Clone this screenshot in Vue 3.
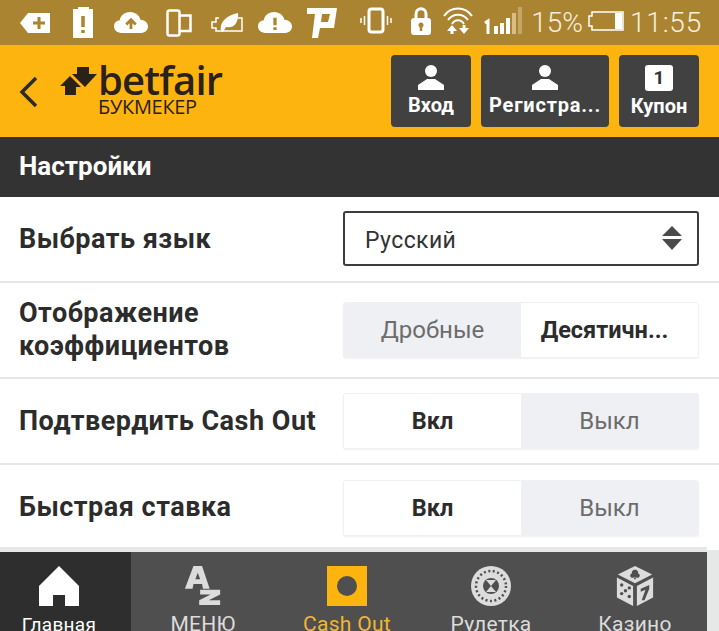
<template>
  <div class="page">
    <!-- статус-бар -->
    <div class="status-bar">
      <div class="status-icons">
        <svg width="30" height="20" viewBox="0 0 30 20" class="s-tag"><path d="M8 0H30V20H8L0 10Z" fill="#fff"/><path d="M13 10H25M19 4V16" stroke="#ab8431" stroke-width="3"/></svg>
        <svg width="21" height="31" viewBox="0 0 21 31" class="s-batt"><path d="M5 0H16V2H20V31H0V2H5Z" fill="#fff"/><path d="M10 9V20M10 23V26" stroke="#ab8431" stroke-width="3.500"/></svg>
        <svg width="34" height="23" viewBox="0 0 36 24" class="s-cloud"><path d="M8 23C3 23 0 20 0 16C0 12 3 10 6 10C7 4 12 1 17 1C23 1 27 5 28 9C32 9 36 12 36 16C36 20 33 23 29 23Z" fill="#fff"/><path d="M18 19V10M13 14L18 9L23 14" stroke="#ab8431" stroke-width="3" fill="none"/></svg>
        <svg width="26" height="28" viewBox="0 0 26 28" class="s-phones"><rect x="1.500" y="1.500" width="12" height="25" rx="2" fill="none" stroke="#fff" stroke-width="2.500"/><path d="M14 6.500H24.500V22H14" fill="none" stroke="#fff" stroke-width="2.500"/></svg>
        <svg width="33" height="22" viewBox="0 0 33 22" class="s-leaf"><path d="M8 6H5V10H1V16H5V19H31V6H27" fill="none" stroke="#fff" stroke-width="1.500"/><path d="M10 19C8 10 16 3 27 1C28 10 23 17 15 15L12 20Z" fill="#fff"/></svg>
        <svg width="34" height="23" viewBox="0 0 36 24" class="s-cloud2"><path d="M8 23C3 23 0 20 0 16C0 12 3 10 6 10C7 4 12 1 17 1C23 1 27 5 28 9C32 9 36 12 36 16C36 20 33 23 29 23Z" fill="#fff"/><path d="M18 7V15M18 17V20" stroke="#ab8431" stroke-width="3.500"/></svg>
        <svg width="30" height="30" viewBox="0 0 30 30" class="s-p"><path fill-rule="evenodd" d="M0 0H30L27 20H13L11 30H5L8 6H0ZM15 6H23L21 14H14Z" fill="#fff"/></svg>
      </div>
      <div class="status-right">
        <svg width="32" height="27" viewBox="0 0 32 27"><rect x="9" y="2" width="14" height="23" rx="2.500" fill="none" stroke="#fff" stroke-width="3"/><path d="M4.500 9V18M1 11V16M27.500 9V18M31 11V16" stroke="#fff" stroke-width="1.500"/></svg>
        <svg width="20" height="28" viewBox="0 0 20 28" class="s-lock"><path d="M5 12V7C5 0 15 0 15 7V12" fill="none" stroke="#fff" stroke-width="3"/><rect x="0" y="11" width="20" height="17" rx="3" fill="#fff"/><circle cx="10" cy="18" r="2.500" fill="#ab8431"/><path d="M10 19V24" stroke="#ab8431" stroke-width="2.500"/></svg>
        <svg width="32" height="29" viewBox="0 0 32 29" class="s-wifi"><path d="M1 10C8 0 22 0 29 10M5 14C10 7 20 7 25 14M9 18C12 13 18 13 21 18" fill="none" stroke="#fff" stroke-width="2"/><path d="M9 19L4 25H7.500V28H10.500V25H14Z" fill="#fff"/><path d="M21 28L26 22H22.500V19H19.500V22H16Z" fill="#fff"/></svg>
        <svg width="40" height="29" viewBox="0 0 40 29" class="s-signal"><path d="M2 17L5 15V28" stroke="#fff" stroke-width="3" fill="none"/><rect x="11" y="20" width="4" height="8" fill="#fff"/><rect x="17" y="17" width="4" height="11" fill="#fff"/><rect x="23" y="12" width="4" height="16" fill="#fff"/><rect x="29" y="7" width="4" height="21" fill="#d8bd85"/><rect x="35" y="1" width="4" height="27" fill="#c3a566"/></svg>
        <span class="battery-text">15%</span>
        <svg width="36" height="20" viewBox="0 0 36 20" class="s-charge"><path d="M4 1H35V19H4V15H1V5H4Z" fill="none" stroke="#fff" stroke-width="1.500"/><rect x="27" y="2" width="7" height="16" fill="#fff"/></svg>
        <span class="clock">11:55</span>
      </div>
    </div>

    <!-- шапка -->
    <header class="top">
      <svg class="back" width="20" height="32" viewBox="0 0 20 32"><path d="M17 2L3 16L17 30" fill="none" stroke="#2b2b2b" stroke-width="3.500"/></svg>
      <div class="logo">
        <svg class="logo-mark" width="38" height="30" viewBox="0 0 38 30"><path d="M17 0H29V7H37L25 20L12 7H17Z" fill="#2a2118"/><path d="M0 19L10 9L21 20H16V28H5V19Z" fill="#2a2118"/></svg>
        <div class="logo-text">
          <div class="logo-name">betfair</div>
          <div class="logo-sub">БУКМЕКЕР</div>
        </div>
      </div>
      <div class="top-buttons">
        <button class="top-btn login">
          <svg width="26" height="25" viewBox="0 0 26 25"><circle cx="13" cy="6" r="6" fill="#fff"/><path d="M0 25V20L9 14H17L26 20V25Z" fill="#fff"/></svg>
          <span>Вход</span>
        </button>
        <button class="top-btn register">
          <svg width="26" height="25" viewBox="0 0 26 25"><circle cx="13" cy="6" r="6" fill="#fff"/><path d="M0 25V20L9 14H17L26 20V25Z" fill="#fff"/></svg>
          <span>Регистра...</span>
        </button>
        <button class="top-btn coupon">
          <span class="coupon-count">1</span>
          <span>Купон</span>
        </button>
      </div>
    </header>

    <div class="title-bar">Настройки</div>

    <!-- настройки -->
    <div class="settings">
      <div class="row row-lang">
        <div class="row-label">Выбрать язык</div>
        <div class="select">
          <span>Русский</span>
          <svg width="20" height="24" viewBox="0 0 20 24"><path d="M10 0L20 10H0Z M0 13H20L10 24Z" fill="#4a4a4a"/></svg>
        </div>
      </div>
      <div class="row row-odds">
        <div class="row-label">Отображение<br>коэффициентов</div>
        <div class="toggle">
          <div class="opt">Дробные</div>
          <div class="opt on trunc">Десятичн...</div>
        </div>
      </div>
      <div class="row row-switch">
        <div class="row-label">Подтвердить Cash Out</div>
        <div class="toggle">
          <div class="opt on">Вкл</div>
          <div class="opt">Выкл</div>
        </div>
      </div>
      <div class="row row-switch last">
        <div class="row-label">Быстрая ставка</div>
        <div class="toggle">
          <div class="opt on">Вкл</div>
          <div class="opt">Выкл</div>
        </div>
      </div>
    </div>

    <!-- нижнее меню -->
    <div class="nav-wrap">
      <nav class="bottom-nav">
        <div class="nav-item active">
          <svg width="42" height="40" viewBox="0 0 42 40"><path d="M21 0L41 20V40H27V29H15V40H1V20Z" fill="#fff"/></svg>
          <span>Главная</span>
        </div>
        <div class="nav-item">
          <svg width="40" height="42" viewBox="0 0 40 42"><path d="M10 0H19L27 24H20L19 19H10L9 24H1Z M12 14H17L14.500 7Z" fill="#dcdcdc" fill-rule="evenodd"/><path d="M17 25H38V30L26 36H38V41H16V36L28 30H17Z" fill="#dcdcdc"/></svg>
          <span>МЕНЮ</span>
        </div>
        <div class="nav-item cash">
          <div class="cash-icon"><i></i></div>
          <span>Cash Out</span>
        </div>
        <div class="nav-item">
          <svg width="40" height="40" viewBox="0 0 40 40"><circle cx="20" cy="20" r="20" fill="#dcdcdc"/><circle cx="20" cy="20" r="15" fill="none" stroke="#4f4f4f" stroke-width="2.500" stroke-dasharray="2 2.500"/><circle cx="20" cy="20" r="8" fill="#4f4f4f"/><path d="M20 20L15 14H25ZM20 20L15 26H25Z" fill="#dcdcdc"/></svg>
          <span>Рулетка</span>
        </div>
        <div class="nav-item">
          <svg width="38" height="42" viewBox="0 0 38 42"><path d="M19 0L37 9L19 18L1 9Z" fill="#dcdcdc"/><path d="M0 12L17 21V42L0 33Z" fill="#dcdcdc"/><path d="M21 21L38 12V33L21 42Z" fill="#dcdcdc"/><path d="M19 4C16 4 15 7 16 8C14 8 13 11 15 12C17 13 18 12 18.500 11L18 14H20L19.500 11C20 12 21 13 23 12C25 11 24 8 22 8C23 7 22 4 19 4Z" fill="#4f4f4f"/><circle cx="5" cy="20" r="1.800" fill="#4f4f4f"/><circle cx="9" cy="26" r="1.800" fill="#4f4f4f"/><circle cx="13" cy="32" r="1.800" fill="#4f4f4f"/><circle cx="5" cy="29" r="1.800" fill="#4f4f4f"/><circle cx="13" cy="23" r="1.800" fill="#4f4f4f"/><path d="M25 24L34 20V24L29 36H26L30 25L25 27Z" fill="#4f4f4f"/></svg>
          <span>Казино</span>
        </div>
      </nav>
    </div>
  </div>
</template>

<script setup>
</script>

<style>
html, body { margin: 0; background: #fff; }
</style>

<style scoped>
.page {
  width: 719px;
  height: 631px;
  overflow: hidden;
  display: flex;
  flex-direction: column;
  font-family: Roboto, "Liberation Sans", sans-serif;
  background: #fff;
  color: #2c2c2c;
}

.status-bar {
  height: 45px;
  flex: none;
  background: #ab8431;
  display: flex;
  align-items: center;
  justify-content: space-between;
  padding: 0 17px 0 20px;
  box-sizing: border-box;
}

.status-icons {
  display: flex;
  align-items: center;
}

.s-batt { margin-left: 23px; }
.s-cloud { margin-left: 20px; }
.s-phones { margin-left: 18px; }
.s-leaf { margin-left: 19px; }
.s-cloud2 { margin-left: 14px; }
.s-p { margin-left: 15px; }

.status-right {
  display: flex;
  align-items: center;
  color: #f7efdf;
}

.status-right svg { flex: none; margin-bottom: 4px; }
.s-lock { margin-left: 19px; }
.s-wifi { margin-left: 12px; }
.s-signal { margin-left: 8px; }
.s-charge { margin-left: 5px; }

.battery-text {
  font-size: 28px;
  margin-left: 8px;
  font-weight: 300;
}

.clock {
  font-size: 28px;
  margin-left: 6px;
  font-weight: 300;
  letter-spacing: 0.8px;
}

.top {
  height: 92px;
  flex: none;
  background: #feb40e;
  display: flex;
  align-items: center;
  padding: 0 20px 0 19px;
  box-sizing: border-box;
}

.back { margin-top: 2px; }

.logo {
  display: flex;
  align-items: flex-start;
  margin-left: 21px;
}

.logo-mark { flex: none; }

.logo-text {
  margin-top: -4px;
  color: #2a2118;
}

.logo-name {
  font-family: "Open Sans", sans-serif;
  font-size: 40px;
  font-weight: 600;
  line-height: 34px;
  letter-spacing: -0.8px;
}

.logo-sub {
  font-family: "Open Sans", sans-serif;
  font-size: 20px;
  line-height: 19px;
  letter-spacing: -0.3px;
}

.top-buttons {
  margin-left: auto;
  display: flex;
  gap: 10px;
}

.top-btn {
  height: 72px;
  border: 0;
  border-radius: 4px;
  background: #414141;
  color: #fff;
  font-family: inherit;
  font-size: 20px;
  font-weight: 700;
  line-height: 24px;
  display: flex;
  flex-direction: column;
  align-items: center;
  justify-content: flex-start;
  padding: 10px 0 0;
  gap: 3px;
}

.login { width: 80px; }
.register { width: 128px; letter-spacing: 0.8px; }
.coupon { width: 80px; }

.coupon-count {
  width: 28px;
  height: 26px;
  border-radius: 3px;
  background: #fff;
  color: #333;
  font-size: 19px;
  line-height: 26px;
  text-align: center;
}

.title-bar {
  height: 60px;
  flex: none;
  background: #333;
  color: #fff;
  font-size: 26px;
  font-weight: 700;
  line-height: 58px;
  padding-left: 19px;
}

.settings {
  flex: none;
  width: 707px;
}

.row {
  display: flex;
  align-items: center;
  justify-content: space-between;
  padding: 0 8px 0 19px;
  border-bottom: 2px solid #e6e8e8;
  box-sizing: border-box;
  width: 719px;
}

.row-label {
  font-size: 27px;
  font-weight: 700;
  line-height: 33px;
  letter-spacing: 0.5px;
  color: #2c2c2c;
}

.row-lang { height: 86px; }
.row-odds { height: 96px; }
.row-switch { height: 86px; }

.row-switch.last {
  height: 87px;
  width: 707px;
  padding-top: 4px;
  padding-right: 0;
  border-bottom: 5px solid #e6e8e8;
}

.row-switch.last .row-label { margin-bottom: 2px; }

.select {
  width: 356px;
  height: 55px;
  margin-right: 12px;
  margin-bottom: 2px;
  padding: 5px 15px 0 20px;
  box-sizing: border-box;
  border: 2px solid #3d3d3d;
  border-radius: 3px;
  display: flex;
  align-items: center;
  justify-content: space-between;
  font-size: 23px;
  letter-spacing: 0.4px;
  color: #333;
}

.select svg { margin-top: -5px; }

.toggle {
  width: 356px;
  height: 56px;
  margin-right: 12px;
  box-sizing: border-box;
  display: flex;
  border: 1px solid #f0f1f2;
  border-radius: 3px;
  background: #eff0f3;
  box-shadow: 0 1px 2px rgba(0, 0, 0, 0.06);
}

.row-switch.last .toggle { margin-right: 8px; }

.opt {
  width: 50%;
  box-sizing: border-box;
  text-align: center;
  line-height: 54px;
  font-size: 24px;
  color: #6c6c6c;
}

.opt.on {
  background: #fff;
  color: #2c2c2c;
  font-size: 23.500px;
  font-weight: 700;
}

.opt.trunc { padding-right: 10px; }

.nav-wrap {
  flex: none;
  height: 81px;
  margin-top: -2px;
  padding-top: 2px;
  box-sizing: border-box;
  background: #e6e8e8;
}

.bottom-nav {
  width: 720px;
  height: 79px;
  margin-left: -13px;
  background: #4f4f4f;
  display: flex;
}

.nav-item {
  width: 144px;
  display: flex;
  flex-direction: column;
  align-items: center;
  padding-top: 14px;
  box-sizing: border-box;
  color: #dcdcdc;
  font-size: 21px;
  letter-spacing: 0.3px;
}

.nav-item svg, .cash-icon {
  height: 40px;
  flex: none;
}

.nav-item span { margin-top: 6px; }
.nav-item.active { background: #2e2e2e; color: #fff; font-size: 19px; }
.nav-item.active span { margin-top: 7px; }
.nav-item.cash { color: #f2b632; }

.cash-icon {
  width: 40px;
  background: #feb40e;
  display: flex;
  align-items: center;
  justify-content: center;
}

.cash-icon i {
  width: 20px;
  height: 20px;
  border-radius: 50%;
  background: #4f4f4f;
}
</style>
